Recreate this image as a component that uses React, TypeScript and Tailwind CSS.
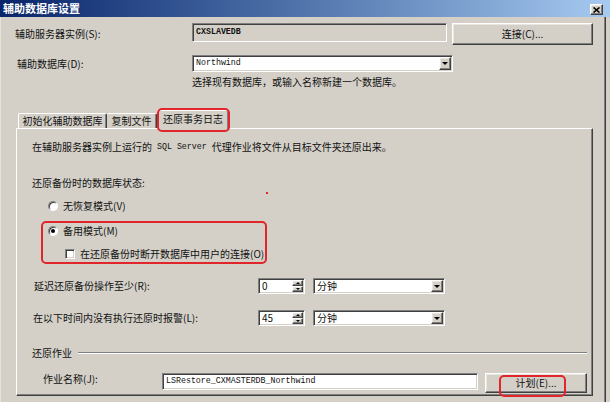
import type { ReactNode } from 'react'

// classic win2k 3d borders
const sunken =
  'border border-t-[#808080] border-l-[#808080] border-b-white border-r-white shadow-[inset_1px_1px_0_#404040,inset_-1px_-1px_0_#d4d0c8]'
const raised =
  'border border-t-white border-l-white border-b-[#404040] border-r-[#404040] shadow-[inset_-1px_-1px_0_#808080,inset_1px_1px_0_#e8e6e0]'
const mono = "font-['Liberation_Mono',monospace] text-[8.3px]"

function DownArrow() {
  return (
    <span className="w-0 h-0 border-l-[3px] border-r-[3px] border-t-[3px] border-l-transparent border-r-transparent border-t-black" />
  )
}

function Combo({ value, width, height }: { value: ReactNode; width: string; height: string }) {
  return (
    <div className={`${sunken} bg-white p-[1px] flex items-stretch ${width} ${height}`}>
      <span className="flex-1 pl-[2px] flex items-center">{value}</span>
      <span className={`${raised} bg-[#d4d0c8] w-[12px] flex items-center justify-center`}>
        <DownArrow />
      </span>
    </div>
  )
}

function Spin({ value }: { value: string }) {
  return (
    <div className={`${sunken} bg-white p-[1px] flex items-stretch w-[47px] h-[16px]`}>
      <span className="flex-1 pl-[2px] flex items-center">{value}</span>
      <span className="w-[11px] flex flex-col">
        <span className={`${raised} bg-[#d4d0c8] flex-1 flex items-center justify-center`}>
          <span className="w-0 h-0 border-l-[2px] border-r-[2px] border-b-[2px] border-l-transparent border-r-transparent border-b-black" />
        </span>
        <span className={`${raised} bg-[#d4d0c8] flex-1 flex items-center justify-center`}>
          <span className="w-0 h-0 border-l-[2px] border-r-[2px] border-t-[2px] border-l-transparent border-r-transparent border-t-black" />
        </span>
      </span>
    </div>
  )
}

function Radio({ checked }: { checked?: boolean }) {
  return (
    <span className="w-[10px] h-[10px] rounded-full bg-white border border-t-[#808080] border-l-[#808080] border-b-white border-r-white shadow-[inset_1px_1px_0_#404040] flex items-center justify-center">
      {checked && <span className="w-[4px] h-[4px] rounded-full bg-black" />}
    </span>
  )
}

function RedBox({ className }: { className: string }) {
  return <span className={`absolute border-2 border-[#e0262b] rounded-[5px] pointer-events-none ${className}`} />
}

export default function App() {
  return (
    <div className="w-[610px] h-[402px] bg-[#d4d0c8] overflow-hidden relative flex flex-col font-['Noto_Sans_CJK_SC',sans-serif] text-[10px] leading-none text-[#111]">
      {/* Title bar */}
      <div className="h-[17px] shrink-0 bg-linear-to-r from-[#0a246a] to-[#a6caf0] flex items-start">
        <span className="pl-[3px] leading-[17px] text-[11px] font-bold text-white">辅助数据库设置</span>
        <span className={`${raised} bg-[#d4d0c8] ml-auto mr-[7px] mt-[4px] w-[13px] h-[11px] flex items-center justify-center`}>
          <svg width="7" height="6" viewBox="0 0 7 6">
            <path d="M0.5 0.5 L6.5 5.5 M6.5 0.5 L0.5 5.5" stroke="#000" strokeWidth="1.6" />
          </svg>
        </span>
      </div>

      {/* Body */}
      <div className="w-[606px] flex-1 flex flex-col border-r border-r-[#404040] shadow-[inset_-1px_0_0_#808080,inset_1px_0_0_#e6e3dc]">
        {/* Secondary server */}
        <div className="mt-[6px] h-[22px] flex items-start">
          <span className="w-[192px] pl-[15px] leading-[22px]">辅助服务器实例(S):</span>
          <div className={`${sunken} w-[255px] h-[19px] flex items-center pl-[3px] ${mono} font-bold`}>CXSLAVEDB</div>
          <button className={`${raised} ml-[5px] w-[141px] h-[22px] bg-[#d4d0c8] flex items-center justify-center`}>
            连接(C)...
          </button>
        </div>

        {/* Secondary database */}
        <div className="mt-[10px] h-[17px] flex items-start">
          <span className="w-[192px] pl-[17px] leading-[17px]">辅助数据库(D):</span>
          <Combo value={<span className={mono}>Northwind</span>} width="w-[261px]" height="h-[17px]" />
        </div>
        <div className="mt-[3px] ml-[192px] h-[14px] leading-[14px]">选择现有数据库，或输入名称新建一个数据库。</div>

        {/* Tabs */}
        <div className="mt-[21px] ml-[18px] h-[18px] flex items-end">
          <div className="w-[89px] h-[15px] border-t border-l border-r border-t-white border-l-white border-r-[#404040] shadow-[inset_-1px_0_0_#808080] rounded-t-[2px] flex items-center justify-center">
            初始化辅助数据库
          </div>
          <div className="w-[50px] h-[15px] border-t border-r border-t-white border-r-[#404040] shadow-[inset_-1px_0_0_#808080] rounded-t-[2px] flex items-center justify-center">
            复制文件
          </div>
          <div className="relative z-10 w-[72px] h-[19px] mb-[-1px] bg-[#d4d0c8] border-t border-l border-r border-t-white border-l-white border-r-[#404040] shadow-[inset_-1px_0_0_#808080] rounded-t-[2px] flex items-center justify-center pb-[2px]">
            还原事务日志
            <RedBox className="-left-[1px] -top-[3px] -right-[2px] -bottom-[3px]" />
          </div>
        </div>

        {/* Tab panel */}
        <div className="ml-[16px] w-[577px] h-[268px] border border-t-white border-l-white border-b-[#404040] border-r-[#404040] shadow-[inset_-1px_-1px_0_#808080] flex flex-col pl-[15px]">
          <div className="mt-[8px] h-[20px] flex items-center">
            在辅助服务器实例上运行的<span className={`${mono} whitespace-pre`}> SQL Server </span>代理作业将文件从目标文件夹还原出来。
          </div>
          <div className="mt-[16px] h-[20px] flex items-center">还原备份时的数据库状态:</div>
          <div className="mt-[3px] h-[20px] pl-[16px] flex items-center gap-[5px]">
            <Radio />
            <span>无恢复模式(V)</span>
          </div>

          <div className="relative mt-[5px] ml-[9px] w-[226px] flex flex-col">
            <RedBox className="inset-0" />
            <div className="h-[20px] pl-[7px] flex items-center gap-[5px]">
              <Radio checked />
              <span>备用模式(M)</span>
            </div>
            <div className="mt-[3px] h-[20px] pl-[24px] flex items-center gap-[5px]">
              <span className={`${sunken} w-[10px] h-[10px] bg-white`} />
              <span>在还原备份时断开数据库中用户的连接(O)</span>
            </div>
          </div>

          <div className="mt-[12px] h-[20px] flex items-center">
            <span className="w-[226px] pl-[2px]">延迟还原备份操作至少(R):</span>
            <Spin value="0" />
            <div className="ml-[8px]">
              <Combo value="分钟" width="w-[132px]" height="h-[16px]" />
            </div>
          </div>
          <div className="mt-[12px] h-[20px] flex items-center">
            <span className="w-[226px] pl-[1px]">在以下时间内没有执行还原时报警(L):</span>
            <Spin value="45" />
            <div className="ml-[8px]">
              <Combo value="分钟" width="w-[132px]" height="h-[16px]" />
            </div>
          </div>

          <div className="mt-[15px] h-[20px] flex items-center">
            <span>还原作业</span>
            <span className="flex-1 ml-[6px] mr-[5px] h-[2px] border-t border-b border-t-[#808080] border-b-white" />
          </div>
          <div className="mt-[8px] h-[22px] flex items-start">
            <span className="w-[130px] pl-[11px] h-[16px] leading-[16px]">作业名称(J):</span>
            <div className={`${sunken} mt-[2px] w-[316px] h-[17px] bg-white flex items-center pl-[3px] ${mono}`}>
              LSRestore_CXMASTERDB_Northwind
            </div>
            <button className={`${raised} relative mt-[2px] ml-[7px] w-[102px] h-[20px] bg-[#d4d0c8] flex items-center justify-center`}>
              计划(E)...
              <RedBox className="left-[13px] top-[1px] w-[67px] h-[22px]" />
            </button>
          </div>
        </div>
      </div>

      {/* stray red dot from the original capture */}
      <span className="absolute left-[266px] top-[192px] w-[2px] h-[2px] bg-[#e0262b]" />
    </div>
  )
}
